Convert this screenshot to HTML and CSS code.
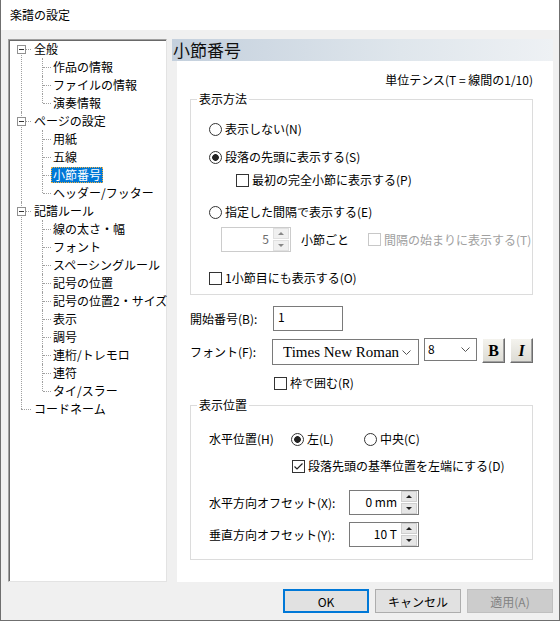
FILE: index.html
```html
<!DOCTYPE html>
<html lang="ja">
<head>
  <meta charset="UTF-8">
  <title>楽譜の設定</title>
  <link rel="stylesheet" href="styles.css">
</head>
<body>
  <div class="window">
    <div class="titlebar">楽譜の設定</div>

    <div class="main">
      <div class="tree-box">
        <ul class="tree">
          <li><span class="toggle"></span><span class="label">全般</span>
            <ul>
              <li><span class="label">作品の情報</span></li>
              <li><span class="label">ファイルの情報</span></li>
              <li><span class="label">演奏情報</span></li>
            </ul>
          </li>
          <li><span class="toggle"></span><span class="label">ページの設定</span>
            <ul>
              <li><span class="label">用紙</span></li>
              <li><span class="label">五線</span></li>
              <li><span class="label selected">小節番号</span></li>
              <li><span class="label">ヘッダー/フッター</span></li>
            </ul>
          </li>
          <li><span class="toggle"></span><span class="label">記譜ルール</span>
            <ul>
              <li><span class="label">線の太さ・幅</span></li>
              <li><span class="label">フォント</span></li>
              <li><span class="label">スペーシングルール</span></li>
              <li><span class="label">記号の位置</span></li>
              <li><span class="label">記号の位置2・サイズ</span></li>
              <li><span class="label">表示</span></li>
              <li><span class="label">調号</span></li>
              <li><span class="label">連桁/トレモロ</span></li>
              <li><span class="label">連符</span></li>
              <li><span class="label">タイ/スラー</span></li>
            </ul>
          </li>
          <li><span class="label">コードネーム</span></li>
        </ul>
      </div>

      <div class="pane">
        <div class="pane-head">小節番号</div>
        <div class="pane-body">
          <div class="unit-note">単位テンス(T = 線間の1/10)</div>

          <fieldset class="group group-method">
            <legend>表示方法</legend>
            <div class="group-inner">
              <div class="opt opt-none"><span class="radio"></span>表示しない(N)</div>
              <div class="opt opt-head"><span class="radio on"></span>段落の先頭に表示する(S)</div>
              <div class="opt opt-first"><span class="check"></span>最初の完全小節に表示する(P)</div>
              <div class="opt opt-interval"><span class="radio"></span>指定した間隔で表示する(E)</div>
              <div class="interval-row">
                <div class="spin disabled">
                  <span class="spin-val">5</span>
                  <span class="spin-btns"><span class="spin-up"></span><span class="spin-down"></span></span>
                </div>
                <span class="interval-unit">小節ごと</span>
                <div class="opt disabled"><span class="check"></span>間隔の始まりに表示する(T)</div>
              </div>
              <div class="opt opt-also"><span class="check"></span>1小節目にも表示する(O)</div>
            </div>
          </fieldset>

          <div class="settings">
            <span class="field-label">開始番号(B):</span>
            <div class="textbox">1</div>

            <span class="field-label">フォント(F):</span>
            <div class="font-controls">
              <div class="select select-font">
                <span class="select-val">Times New Roman</span>
                <svg class="chevron" width="9" height="5" viewBox="0 0 9 5"><path d="M0.5 0.5 L4.5 4.5 L8.5 0.5" fill="none" stroke="#555" stroke-width="1"/></svg>
              </div>
              <div class="select select-size">
                <span class="select-val">8</span>
                <svg class="chevron" width="9" height="5" viewBox="0 0 9 5"><path d="M0.5 0.5 L4.5 4.5 L8.5 0.5" fill="none" stroke="#555" stroke-width="1"/></svg>
              </div>
              <button class="style-btn bold">B</button>
              <button class="style-btn italic">I</button>
            </div>

            <span></span>
            <div class="opt opt-frame"><span class="check"></span>枠で囲む(R)</div>
          </div>

          <fieldset class="group group-pos">
            <legend>表示位置</legend>
            <div class="group-inner">
              <div class="pos-row">
                <span class="pos-label">水平位置(H)</span>
                <div class="opt pos-left"><span class="radio on"></span>左(L)</div>
                <div class="opt"><span class="radio"></span>中央(C)</div>
              </div>
              <div class="opt opt-edge">
                <span class="check"><svg width="11" height="11" viewBox="0 0 11 11"><path d="M1.5 5.5 L4 8 L9.5 2.5" fill="none" stroke="#222" stroke-width="1.2"/></svg></span>段落先頭の基準位置を左端にする(D)
              </div>
              <div class="offset-row offset-x">
                <span class="offset-label">水平方向オフセット(X):</span>
                <div class="spin">
                  <span class="spin-val">0 mm</span>
                  <span class="spin-btns"><span class="spin-up"></span><span class="spin-down"></span></span>
                </div>
              </div>
              <div class="offset-row offset-y">
                <span class="offset-label">垂直方向オフセット(Y):</span>
                <div class="spin">
                  <span class="spin-val">10 T</span>
                  <span class="spin-btns"><span class="spin-up"></span><span class="spin-down"></span></span>
                </div>
              </div>
            </div>
          </fieldset>
        </div>
      </div>
    </div>

    <div class="footer">
      <button class="btn btn-default">OK</button>
      <button class="btn">キャンセル</button>
      <button class="btn" disabled>適用(A)</button>
    </div>
  </div>
</body>
</html>
```

FILE: styles.css
```css
* {
  box-sizing: border-box;
}

body {
  margin: 0;
  font-family: "Noto Sans CJK JP", "Noto Sans", sans-serif;
  font-size: 12px;
  line-height: 16px;
  color: #000;
}

.window {
  width: 560px;
  height: 621px;
  background-color: #f0f0f0;
  border: 1px solid #6f6f6f;
  border-top: none;
  display: flex;
  flex-direction: column;
}

.titlebar {
  height: 30px;
  line-height: 30px;
  padding-left: 9px;
  background-color: #fff;
}

.main {
  display: flex;
  gap: 5px;
  padding: 9px 0 0 7px;
}

/* tree view */

.tree-box {
  width: 159px;
  height: 543px;
  background-color: #fff;
  border: 1px solid;
  border-color: #a0a0a0 #e3e3e3 #e3e3e3 #a0a0a0;
  box-shadow: inset 1px 1px 0 #696969;
}

.tree,
.tree ul {
  list-style: none;
  margin: 0;
  padding: 0;
}

.tree li {
  position: relative;
}

.tree > li {
  padding-left: 23px;
}

.tree ul {
  padding-left: 19px;
}

.tree li::before,
.tree li::after {
  content: '';
  position: absolute;
}

.tree > li::after {
  left: 12px;
  top: 0;
  bottom: 0;
  border-left: 1px dotted #a0a0a0;
}

.tree > li:first-child::after {
  top: 9px;
}

.tree > li:last-child::after {
  bottom: auto;
  height: 9px;
}

.tree > li::before {
  left: 12px;
  top: 9px;
  width: 10px;
  border-top: 1px dotted #a0a0a0;
}

.tree ul li::after {
  left: -9px;
  top: 0;
  bottom: 0;
  border-left: 1px dotted #a0a0a0;
}

.tree ul li:last-child::after {
  bottom: auto;
  height: 9px;
}

.tree ul li::before {
  left: -8px;
  top: 9px;
  width: 8px;
  border-top: 1px dotted #a0a0a0;
}

.toggle {
  position: absolute;
  left: 8px;
  top: 5px;
  width: 9px;
  height: 9px;
  border: 1px solid #919191;
  background-color: #fff;
  z-index: 1;
}

.toggle::before {
  content: '';
  position: absolute;
  left: 1px;
  right: 1px;
  top: 3px;
  border-top: 1px solid #333;
}

.tree .label {
  display: inline-block;
  padding: 0 2px;
  margin: 1px 0;
  line-height: 16px;
  white-space: nowrap;
}

.tree .label.selected {
  background-color: #0078d7;
  color: #fff;
  outline: 1px dotted #f0b040;
  outline-offset: -1px;
}

/* right pane */

.pane {
  width: 381px;
  height: 543px;
  display: flex;
  flex-direction: column;
}

.pane-head {
  height: 22px;
  line-height: 22px;
  padding-left: 1px;
  font-size: 17px;
  color: #111;
  background: linear-gradient(to right, #c4d0dd, #dfe6ec 60%, #eef1f4);
}

.pane-body {
  flex: 1;
  margin-left: 5px;
  background-color: #fff;
  padding: 11px 20px 0 13px;
}

.unit-note {
  text-align: right;
}

.group {
  margin: 3px 0 0;
  padding: 0;
  border: 1px solid #dcdcdc;
  min-width: 0;
}

.group legend {
  margin-left: 6px;
  padding: 0 2px;
  line-height: 16px;
}

.group-inner {
  padding: 0 0 0 18px;
}

.group-method .group-inner {
  padding-top: 14px;
  padding-bottom: 8px;
}

.opt {
  display: flex;
  align-items: center;
  height: 16px;
  white-space: nowrap;
}

.opt.disabled {
  color: #a0a0a0;
}

.radio,
.check {
  flex: none;
  width: 13px;
  height: 13px;
  margin-right: 3px;
  border: 1px solid #333;
  background-color: #fff;
  display: flex;
  align-items: center;
  justify-content: center;
}

.radio {
  border-radius: 50%;
}

.radio.on {
  background: radial-gradient(circle, #222 3px, #fff 3.7px);
}

.opt.disabled .check {
  border-color: #c8c8c8;
}

.opt-head {
  margin-top: 12px;
}

.opt-first {
  margin-top: 7px;
  margin-left: 27px;
}

.opt-interval {
  margin-top: 16px;
}

.interval-row {
  display: flex;
  align-items: center;
  margin-top: 7px;
  margin-left: 12px;
}

.interval-unit {
  margin-left: 10px;
  margin-right: 19px;
}

.opt-also {
  margin-top: 18px;
}

/* spin boxes */

.spin {
  width: 70px;
  height: 25px;
  display: flex;
  border: 1px solid #7a7a7a;
  background-color: #fff;
}

.spin.disabled {
  border-color: #cccccc;
  color: #6d6d6d;
}

.spin-val {
  flex: 1;
  text-align: right;
  padding-right: 4px;
  line-height: 21px;
}

.spin-btns {
  width: 17px;
  display: flex;
  flex-direction: column;
  gap: 1px;
  padding: 0 1px 0 0;
}

.spin-up,
.spin-down {
  flex: 1;
  display: flex;
  align-items: center;
  justify-content: center;
  background-color: #e6e6e6;
  border: 1px solid #cfcfcf;
}

.spin-up::before,
.spin-down::before {
  content: '';
  border-left: 3px solid transparent;
  border-right: 3px solid transparent;
}

.spin-up::before {
  border-bottom: 3px solid #222;
}

.spin-down::before {
  border-top: 3px solid #222;
}

.spin.disabled .spin-up,
.spin.disabled .spin-down {
  background-color: #f0f0f0;
  border-color: #e0e0e0;
}

.spin.disabled .spin-up::before {
  border-bottom-color: #888;
}

.spin.disabled .spin-down::before {
  border-top-color: #888;
}

/* start number / font */

.settings {
  display: grid;
  grid-template-columns: 83px auto;
  align-items: center;
  row-gap: 7px;
  margin-top: 11px;
}

.textbox {
  width: 70px;
  height: 25px;
  border: 1px solid #7a7a7a;
  padding-left: 4px;
  line-height: 20px;
}

.font-controls {
  display: flex;
  align-items: flex-start;
  gap: 5px;
  margin-left: -1px;
}

.select {
  display: flex;
  align-items: center;
  border: 1px solid #7a7a7a;
  background-color: #fff;
  white-space: nowrap;
}

.select-font {
  width: 147px;
  height: 26px;
  margin-top: 1px;
  padding: 0 7px 0 10px;
  font-family: "Liberation Serif", serif;
  font-size: 15px;
}

.select-size {
  width: 53px;
  height: 23px;
  padding: 0 6px 0 3px;
  align-items: flex-start;
}

.select-size .select-val {
  line-height: 20px;
}

.select-size .chevron {
  margin-top: 8px;
}

.select-val {
  flex: 1;
  overflow: hidden;
}

.chevron {
  flex: none;
  margin-left: 3px;
}

.style-btn {
  width: 23px;
  height: 25px;
  padding: 0;
  font-family: "Liberation Serif", serif;
  font-size: 16px;
  font-weight: bold;
  color: #000;
  background: linear-gradient(#f4f3ee, #dcdbd4);
  border: 1px solid;
  border-color: #fff #6d6d6d #6d6d6d #fff;
  box-shadow: inset -1px -1px 0 #a0a0a0;
}

.style-btn.italic {
  font-style: italic;
}

.opt-frame {
  margin-top: 3px;
  margin-left: 1px;
}

/* display position */

.group-pos {
  margin-top: 6px;
}

.group-pos .group-inner {
  padding-top: 18px;
  padding-bottom: 12px;
}

.pos-row {
  display: flex;
  align-items: center;
}

.pos-label {
  width: 82px;
}

.pos-left {
  width: 73px;
}

.opt-edge {
  margin-top: 11px;
  margin-left: 83px;
}

.offset-row {
  display: flex;
  align-items: center;
}

.offset-x {
  margin-top: 16px;
}

.offset-y {
  margin-top: 7px;
}

.offset-label {
  width: 140px;
}

/* dialog buttons */

.footer {
  display: flex;
  justify-content: flex-end;
  gap: 6px;
  padding: 7px 6px 0 0;
}

.btn {
  width: 86px;
  height: 24px;
  font-family: inherit;
  font-size: 12px;
  color: #000;
  background-color: #e1e1e1;
  border: 1px solid #adadad;
}

.btn-default {
  border: 2px solid #0078d7;
}

.btn:disabled {
  background-color: #cccccc;
  border-color: #bfbfbf;
  color: #838383;
}
```
